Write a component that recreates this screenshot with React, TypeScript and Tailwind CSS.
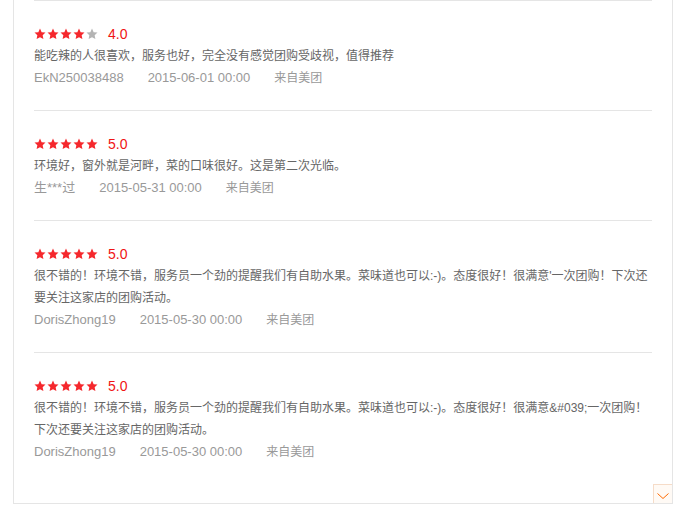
import React from "react";

type Review = { score: number; text: string; user: string; date: string };

const reviews: Review[] = [
  {
    score: 4,
    text: "能吃辣的人很喜欢，服务也好，完全没有感觉团购受歧视，值得推荐",
    user: "EkN250038488",
    date: "2015-06-01 00:00",
  },
  {
    score: 5,
    text: "环境好，窗外就是河畔，菜的口味很好。这是第二次光临。",
    user: "生***过",
    date: "2015-05-31 00:00",
  },
  {
    score: 5,
    text: "很不错的！环境不错，服务员一个劲的提醒我们有自助水果。菜味道也可以:-)。态度很好！很满意'一次团购！下次还要关注这家店的团购活动。",
    user: "DorisZhong19",
    date: "2015-05-30 00:00",
  },
  {
    score: 5,
    text: "很不错的！环境不错，服务员一个劲的提醒我们有自助水果。菜味道也可以:-)。态度很好！很满意&#039;一次团购！下次还要关注这家店的团购活动。",
    user: "DorisZhong19",
    date: "2015-05-30 00:00",
  },
];

function Star({ on }: { on: boolean }) {
  return (
    <svg width="12" height="12" viewBox="0 0 24 24" className={on ? "text-[#f5282d]" : "text-[#b4b4b4]"}>
      <path
        fill="currentColor"
        d="M12 1.2l3.3 7.1 7.7.9-5.7 5.3 1.5 7.7L12 18.4l-6.8 3.8 1.5-7.7L1 9.2l7.7-.9z"
      />
    </svg>
  );
}

export default function App() {
  return (
    <div
      className="w-[686px] h-[507px] bg-white overflow-hidden"
      style={{ fontFamily: '"Liberation Sans", "Noto Sans CJK SC", sans-serif' }}
    >
      <div className="ml-[13px] w-[660px] border-x border-b border-[#e5e5e5] px-5">
        {reviews.map((r, i) => (
          <div key={i} className="border-t border-[#e5e5e5] pt-[21px] pb-[21px]">
            <div className="h-[23px] flex items-center">
              <div className="flex gap-px">
                {[0, 1, 2, 3, 4].map((s) => (
                  <Star key={s} on={s < r.score} />
                ))}
              </div>
              <span className="ml-[10px] text-[14px] text-[#f01414] leading-none">
                {r.score.toFixed(1)}
              </span>
            </div>
            <p className="text-[12px] leading-[22px] text-[#666]">{r.text}</p>
            <div className="flex gap-6 text-[13px] leading-[22px] text-[#999]">
              <span>{r.user}</span>
              <span>{r.date}</span>
              <span className="text-[12px]">来自美团</span>
            </div>
          </div>
        ))}
        <div className="h-[19px] -mr-5 flex justify-end">
          <button className="w-[19px] h-[19px] border-t border-l border-[#f6dcc8] bg-[#fffaf5] flex items-center justify-center pt-[4px]">
            <svg width="12" height="6" viewBox="0 0 12 6">
              <path d="M0.5 0.5L6 5.5L11.5 0.5" fill="none" stroke="#ff6a00" strokeWidth="1" />
            </svg>
          </button>
        </div>
      </div>
    </div>
  );
}
